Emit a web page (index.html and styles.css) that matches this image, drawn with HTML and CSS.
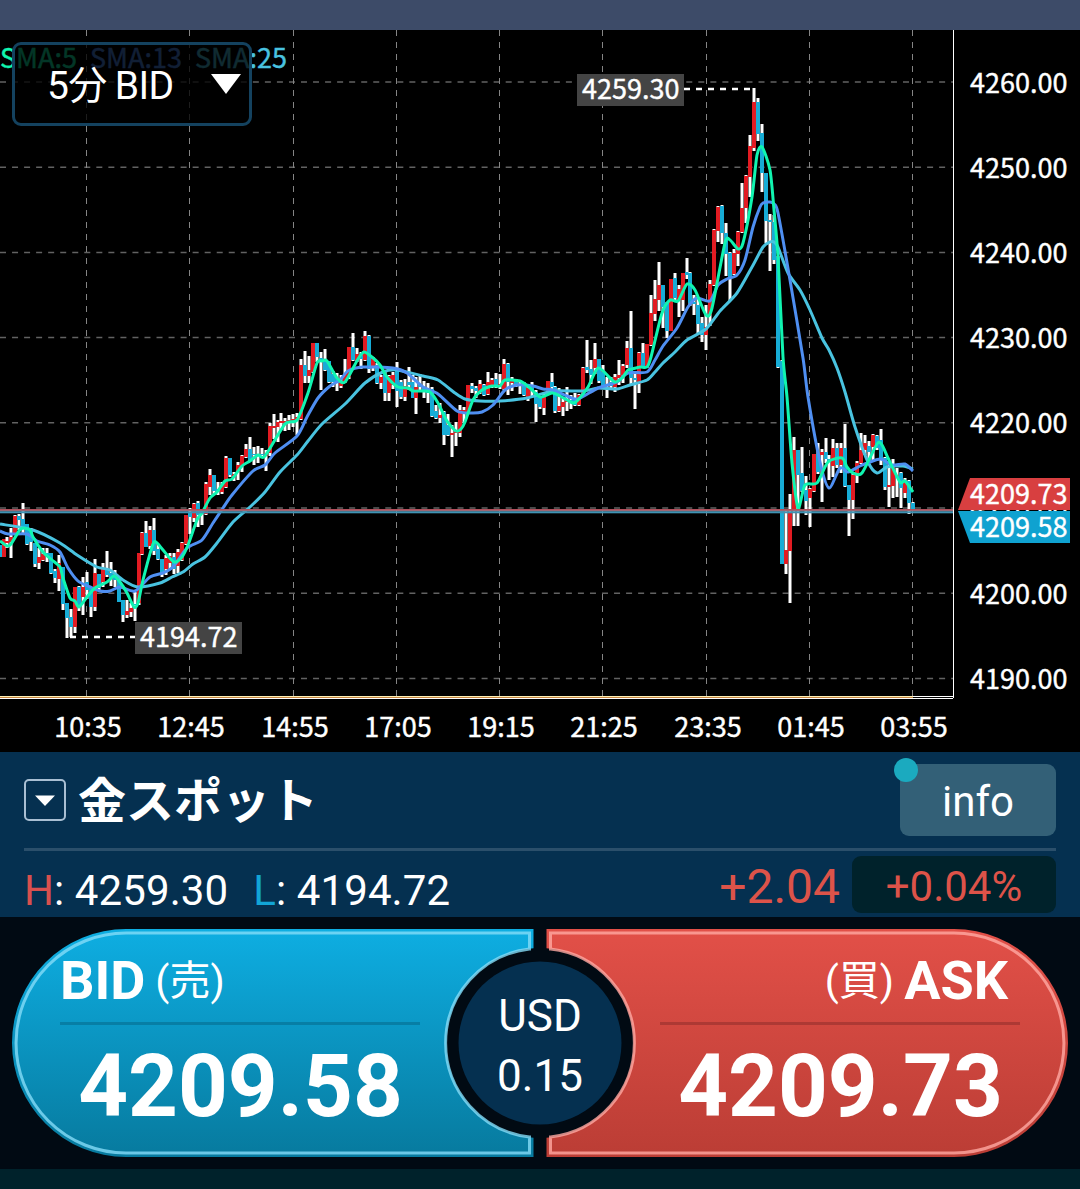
FILE: index.html
```html
<!DOCTYPE html>
<html lang="ja">
<head>
    <meta charset="UTF-8">
    <meta name="viewport" content="width=device-width, initial-scale=1.0">
    <title>金スポット</title>
    <link rel="stylesheet" href="styles.css">
</head>
<body>
    <div class="status-bar"></div>

    <!-- Chart -->
    <div class="chart">
        <svg id="chart" width="1080" height="722" viewBox="0 30 1080 722">
            <g id="grid"></g>
            <g id="candles"></g>
            <g id="averages"></g>
            <g id="overlay"></g>
        </svg>
        <div class="period-select">
            <span>5分 BID</span>
            <svg width="30" height="22" viewBox="0 0 30 22"><path d="M0 1H30L15 21Z" fill="#fff"/></svg>
        </div>
    </div>

    <!-- Instrument -->
    <div class="instrument">
        <div class="title-row">
            <svg class="toggle" width="42" height="42" viewBox="0 0 42 42">
                <rect x="1" y="1" width="40" height="40" rx="4" fill="none" stroke="#a9bfd3" stroke-width="2"/>
                <path d="M11 16.500H31L21 27Z" fill="#fff"/>
            </svg>
            <h1>金スポット</h1>
            <div class="info">info<i class="dot"></i></div>
        </div>
        <div class="stats-row">
            <span class="high"><b>H</b>: 4259.30</span>
            <span class="low"><b>L</b>: 4194.72</span>
            <span class="change">+2.04</span>
            <span class="percent">+0.04%</span>
        </div>
    </div>

    <!-- Order buttons -->
    <div class="order">
        <svg class="order-shape" width="1080" height="252" viewBox="0 0 1080 252">
            <defs>
                <linearGradient id="blue" x1="0" y1="0" x2="0" y2="1">
                    <stop offset="0" stop-color="#0eaee2"/>
                    <stop offset="1" stop-color="#077a9e"/>
                </linearGradient>
                <linearGradient id="red" x1="0" y1="0" x2="0" y2="1">
                    <stop offset="0" stop-color="#e25048"/>
                    <stop offset="1" stop-color="#bb3d35"/>
                </linearGradient>
            </defs>
            <path d="M533.500 12H126A114 114 0 0 0 126 240H533.500V220.700A95 95 0 0 1 533.500 31.300Z" fill="url(#blue)"/>
            <path d="M529.500 16H126A110 110 0 0 0 126 236H529.500V219.900A94.500 94.500 0 0 1 529.500 32.100Z" class="edge" stroke="#85dcf8"/>
            <g transform="matrix(-1 0 0 1 1080 0)">
                <path d="M533.500 12H126A114 114 0 0 0 126 240H533.500V220.700A95 95 0 0 1 533.500 31.300Z" fill="url(#red)"/>
                <path d="M529.500 16H126A110 110 0 0 0 126 236H529.500V219.900A94.500 94.500 0 0 1 529.500 32.100Z" class="edge" stroke="#ffa9a3"/>
            </g>
            <circle cx="540" cy="126" r="81.500" fill="#053050"/>
        </svg>
        <div class="side bid">
            <div class="label"><b>BID</b><small>(売)</small></div>
            <div class="price">4209.58</div>
        </div>
        <div class="spread">
            <div>USD</div>
            <div>0.15</div>
        </div>
        <div class="side ask">
            <div class="label"><small>(買)</small><b>ASK</b></div>
            <div class="price">4209.73</div>
        </div>
    </div>

    <script src="chart.js"></script>
</body>
</html>
```
FILE: styles.css
```css
* {
    margin: 0;
    padding: 0;
    box-sizing: border-box;
}

body {
    width: 1080px;
    height: 1189px;
    overflow: hidden;
    background-color: #00222b;
    color: #fff;
    font-family: Roboto, "Noto Sans CJK JP", sans-serif;
}

svg {
    display: block;
}

.status-bar {
    height: 30px;
    background-color: #3d4b68;
}

/* Chart */
.chart {
    position: relative;
    height: 722px;
    background-color: #000;
}

.chart text {
    font-family: "Noto Sans CJK JP", sans-serif;
    font-size: 27px;
    fill: #fff;
    stroke: #fff;
    stroke-width: 0.4;
}

.chart .sma5 {
    fill: #10f5b0;
    stroke: #10f5b0;
}

.chart .sma13 {
    fill: #4f8ff2;
    stroke: #4f8ff2;
}

.chart .sma25 {
    fill: #49c3e0;
    stroke: #49c3e0;
}

.average {
    fill: none;
    stroke-width: 3;
    stroke-linejoin: round;
}

.period-select {
    position: absolute;
    left: 12px;
    top: 12px;
    width: 240px;
    height: 84px;
    padding: 0 8px 0 32px;
    display: flex;
    align-items: center;
    justify-content: space-between;
    border: 3px solid #14425f;
    border-radius: 9px;
    background-color: rgba(0, 0, 0, 0.78);
    font-size: 39px;
    line-height: 78px;
}

.period-select span {
    padding-top: 4px;
    letter-spacing: -0.6px;
    word-spacing: -1px;
}

/* Instrument */
.instrument {
    height: 165px;
    padding: 0 24px;
    background-color: #053050;
}

.title-row {
    height: 99px;
    display: flex;
    align-items: center;
    border-bottom: 3px solid #2b4f6b;
}

.title-row h1 {
    margin-left: 12px;
    padding-bottom: 7px;
    font-family: "Noto Sans CJK JP", sans-serif;
    font-size: 48px;
    line-height: 60px;
}

.info {
    position: relative;
    width: 156px;
    height: 72px;
    margin-left: auto;
    border-radius: 9px;
    background-color: #336077;
    font-size: 42px;
    line-height: 75px;
    text-align: center;
}

.dot {
    position: absolute;
    left: -6px;
    top: -6px;
    width: 24px;
    height: 24px;
    border-radius: 50%;
    background-color: #1baabf;
}

.stats-row {
    height: 66px;
    padding-top: 5px;
    display: flex;
    align-items: flex-start;
    font-size: 42px;
    line-height: 62px;
}

.stats-row b {
    font-weight: 400;
}

.high,
.low {
    padding-top: 4px;
    letter-spacing: 0.1px;
}

.high b {
    color: #d7504f;
}

.low {
    margin-left: 25px;
}

.low b {
    color: #12a5d6;
}

.change {
    margin-left: auto;
    font-size: 48px;
    color: #dd5349;
}

.percent {
    width: 204px;
    height: 57px;
    margin-left: 12px;
    border-radius: 9px;
    background-color: #00222b;
    text-align: center;
    color: #dd5349;
}

/* Order buttons */
.order {
    position: relative;
    height: 252px;
    padding: 0 60px;
    display: flex;
    justify-content: space-between;
    background-color: #010a13;
}

.order-shape {
    position: absolute;
    left: 0;
    top: 0;
}

.edge {
    fill: none;
    stroke-width: 3;
    stroke-opacity: 0.8;
}

.side {
    position: relative;
    width: 360px;
    padding-top: 30px;
}

.label {
    height: 78px;
    display: flex;
    gap: 10px;
    border-bottom: 3px solid #077ea5;
    font-size: 54px;
    line-height: 68px;
}

.label small {
    font-size: 41px;
    line-height: 68px;
}

.ask .label {
    padding-right: 12px;
    justify-content: flex-end;
    border-color: #ad3934;
}

.price {
    padding-left: 1px;
    font-size: 87px;
    font-weight: 700;
    line-height: 122px;
    text-align: center;
}

.spread {
    position: relative;
    width: 160px;
    padding-top: 69px;
    font-size: 44px;
    line-height: 60px;
    text-align: center;
}
```
FILE: chart.js
```js
// high, body top, body bottom, low, direction (1 = up, 0 = down)
const candles = [
    [545,545,557,557,0],[539,539,557,557,1],[537,541,543,548,1],[528,537,542,558,1],[515,516,534,535,1],
    [514,516,520,530,0],[503,519,527,535,0],[524,524,544,545,0],[528,530,542,551,0],[543,543,564,567,0],
    [548,557,563,569,1],[548,554,560,561,1],[548,553,556,562,0],[553,553,573,574,0],[569,571,578,583,0],
    [555,563,579,591,1],[567,567,604,610,0],[603,603,618,638,0],[609,617,627,637,0],[587,587,627,633,1],
    [586,587,605,611,0],[577,587,597,615,1],[572,582,590,599,0],[588,588,607,617,0],[559,573,607,611,1],
    [574,574,588,591,0],[563,569,582,587,1],[551,570,575,577,0],[562,573,577,586,0],[570,575,580,587,0],
    [578,580,602,602,0],[600,600,615,622,0],[600,611,615,618,1],[603,608,612,617,1],[592,604,605,621,0],
    [553,553,603,605,1],[532,533,554,555,1],[521,533,547,547,0],[526,530,546,549,1],[518,530,551,555,0],
    [544,549,559,560,0],[559,559,574,577,0],[555,558,569,575,1],[553,556,563,569,1],[553,557,569,574,0],
    [549,552,566,573,1],[542,543,560,561,1],[515,515,544,545,1],[508,513,517,534,0],[503,504,518,522,1],
    [501,503,515,527,0],[510,513,514,525,0],[482,484,514,515,1],[469,475,487,495,1],[475,475,491,494,0],
    [482,489,491,495,0],[482,484,492,494,1],[456,458,487,488,1],[458,458,475,477,0],[472,474,476,481,1],
    [462,465,472,480,1],[455,456,467,472,1],[444,449,457,458,1],[437,449,460,461,0],[447,454,455,465,0],
    [446,455,456,463,1],[448,454,455,457,0],[450,454,456,471,1],[423,426,453,456,1],[414,426,428,439,1],
    [420,422,427,442,1],[413,421,423,430,1],[418,421,423,431,1],[415,420,422,430,1],[414,419,421,427,1],
    [413,417,419,435,1],[359,365,419,420,1],[351,365,376,383,0],[356,370,376,383,1],[343,343,372,373,1],
    [343,343,357,362,0],[352,358,361,390,0],[349,360,370,371,0],[361,361,382,383,0],[371,374,382,387,0],
    [373,379,383,391,0],[375,383,386,388,1],[359,374,382,383,1],[347,347,377,379,1],[333,347,360,361,0],
    [348,354,360,362,1],[352,356,359,369,0],[331,336,360,361,1],[335,336,369,373,0],[357,359,368,371,1],
    [363,365,383,384,0],[375,377,383,389,1],[372,374,393,401,0],[375,376,393,401,1],[372,375,385,389,1],
    [362,370,391,407,0],[380,382,397,399,0],[379,386,397,401,1],[367,382,385,390,0],[375,382,398,398,0],
    [377,387,398,414,1],[374,384,387,392,0],[381,388,390,398,0],[383,391,393,403,0],[387,389,416,417,0],
    [405,411,418,419,0],[403,415,418,423,1],[411,412,435,445,0],[414,425,435,436,0],[425,433,435,457,1],
    [422,432,433,446,1],[405,410,433,437,1],[407,410,412,423,1],[385,385,413,414,1],[383,386,389,393,0],
    [386,388,391,398,0],[380,384,393,394,1],[384,385,395,396,0],[372,382,394,395,1],[378,380,385,388,1],
    [373,379,385,388,0],[374,384,386,389,1],[359,364,389,390,1],[363,364,382,395,0],[377,381,383,391,1],
    [379,381,384,387,0],[380,384,386,394,0],[382,384,395,396,0],[387,388,397,401,1],[382,387,391,397,0],
    [390,392,404,422,0],[396,397,407,409,0],[393,395,408,415,1],[381,381,393,394,1],[373,382,387,394,0],
    [386,387,411,413,0],[388,406,411,412,1],[397,402,407,416,1],[387,400,402,411,1],[395,400,402,409,0],
    [393,400,405,406,0],[394,395,405,406,1],[367,368,393,395,1],[340,367,370,373,0],[360,369,375,384,0],
    [343,359,368,374,1],[359,359,381,383,0],[365,372,385,387,0],[377,384,386,398,0],[377,382,386,388,0],
    [374,377,387,392,1],[360,375,378,385,1],[364,366,375,383,1],[341,348,365,368,1],[311,348,378,384,0],
    [374,378,380,409,0],[352,353,384,393,1],[343,353,366,368,0],[344,344,366,368,1],[295,313,345,346,1],
    [280,299,314,321,1],[262,285,300,311,1],[285,285,307,328,0],[302,303,331,338,0],[279,279,331,331,1],
    [273,278,298,301,0],[285,289,300,317,1],[273,273,300,311,1],[258,272,275,279,0],[272,273,303,306,0],
    [295,302,304,315,0],[297,305,324,333,0],[317,323,335,342,0],[305,327,335,350,1],[280,284,315,326,1],
    [229,230,285,286,1],[206,207,231,242,1],[205,206,233,244,0],[223,233,254,276,0],[252,253,277,301,0],
    [249,253,274,275,1],[231,232,254,266,1],[183,208,232,233,1],[175,176,208,223,1],[135,146,177,197,1],
    [88,102,148,151,1],[98,102,134,141,0],[124,133,173,192,0],[173,173,221,243,0],[214,220,222,271,0],
    [215,222,260,264,0],[256,257,367,368,0],[360,361,564,564,0],[511,550,564,574,1],[494,512,551,603,1],
    [437,450,511,526,1],[450,450,475,526,0],[447,473,491,492,0],[476,490,501,515,0],[488,489,498,527,1],
    [454,454,491,492,1],[443,454,472,474,0],[449,452,455,502,1],[438,452,459,463,0],[455,459,461,480,0],
    [439,448,466,477,1],[443,448,465,468,0],[443,448,465,473,1],[424,448,486,487,0],[485,485,500,536,0],
    [474,475,500,519,1],[461,463,475,483,1],[433,450,463,464,1],[435,443,450,455,1],[441,446,452,462,0],
    [434,435,447,462,1],[435,436,448,450,0],[429,440,460,465,0],[457,458,487,490,0],[463,485,487,507,1],
    [459,465,486,498,1],[468,476,478,497,0],[472,473,488,508,0],[478,482,493,498,1],[480,481,503,514,0],
    [502,503,509,509,0]
];

const averages = [
    { color: '#49c3e0', points: '0,524 33,530 60,543 77,555 97,567 110,570 123,580 138,587 160,583 172,577 183,572 193,564 205,557 217,543 233,522 250,507 265,492 280,472 297,455 308,441 322,424 345,404 365,383 383,372 397,370 423,376 438,380 455,393 465,399 480,401 500,401 527,398 553,391 583,391 598,388 617,389 630,385 647,380 655,372 663,363 675,352 687,340 706,329 720,311 737,293 752,267 763,247 770,242 774,242 778,247 788,273 800,290 810,310 822,338 829,350 837,368 845,392 855,427 868,462 877,473 887,467 903,466 913,469' },
    { color: '#4f8ff2', points: '0,531 8,534 27,534 37,541 50,545 60,552 68,568 78,581 88,586 100,591 110,591 120,587 135,591 150,577 163,573 173,567 187,548 202,540 213,523 223,508 232,495 253,471 265,465 275,453 297,436 307,417 318,398 330,386 340,380 348,371 363,367 393,368 407,373 423,387 438,394 457,411 470,413 482,412 493,405 505,390 517,385 533,386 543,389 553,390 567,396 578,399 598,388 617,382 628,373 647,372 655,360 663,346 677,328 688,307 697,298 710,301 718,285 727,279 737,275 745,260 753,227 760,207 763,203 770,202 774,204 778,213 790,280 803,358 808,397 820,462 829,488 840,468 848,472 860,466 870,462 881,459 892,465 905,464 913,471' },
    { color: '#10f5b0', points: '0,541 7,546 11,544 19,531 23,528 30,530 33,537 43,552 52,560 60,567 63,578 70,598 75,601 79,607 87,597 95,588 107,582 114,576 120,582 127,593 134,607 138,603 143,580 153,544 157,543 163,550 174,562 182,557 188,545 197,520 202,513 210,498 217,492 225,481 232,479 242,466 250,461 258,455 265,456 285,424 297,420 308,393 317,363 322,361 327,361 337,378 345,382 358,359 364,352 372,357 380,365 387,377 398,387 408,388 413,391 423,391 430,392 438,403 447,421 456,431 461,429 465,422 473,400 482,390 492,386 500,386 505,380 520,381 530,388 540,397 552,393 560,396 573,403 578,400 588,387 598,368 610,378 615,382 622,378 628,370 632,369 640,367 647,367 651,357 662,313 670,300 678,301 687,284 695,290 706,315 712,308 725,243 730,240 738,249 743,243 752,197 757,155 762,147 770,170 774,210 778,257 783,357 787,397 792,463 798,508 805,485 817,483 828,462 842,458 847,467 853,473 862,473 877,444 882,445 888,458 900,482 905,481 913,492' }
];

const times = ['10:35', '12:45', '14:55', '17:05', '19:15', '21:25', '23:35', '01:45', '03:55'];

// Turn a list of points into a smooth curve
function smoothPath(list) {
    const p = list.split(' ').map(pair => pair.split(',').map(Number));
    let d = `M${p[0]}`;
    for (let i = 0; i < p.length - 1; i++) {
        const a = p[i - 1] || p[i];
        const b = p[i];
        const c = p[i + 1];
        const e = p[i + 2] || c;
        d += `C${b[0] + (c[0] - a[0]) / 8} ${b[1] + (c[1] - a[1]) / 8} ${c[0] - (e[0] - b[0]) / 8} ${c[1] - (e[1] - b[1]) / 8} ${c[0]} ${c[1]}`;
    }
    return d;
}

// Grid, axes and scale labels
let grid = '';
for (let i = 0; i < 8; i++) {
    const y = 82 + i * 85.2;
    grid += `<path d="M0 ${y}H953" stroke="#626262" stroke-width="1.500" stroke-dasharray="6 6.04"/>`;
    grid += `<text x="970" y="${y + 10.5}">${4260 - i * 10}.00</text>`;
}
times.forEach((time, i) => {
    const x = Math.floor(86.6 + i * 103.25) + 0.5;
    grid += `<path d="M${x} 30V696" stroke="#858585" stroke-dasharray="6 6"/>`;
    grid += `<text x="${x + 1.5}" y="736.500" text-anchor="middle">${time}</text>`;
});
grid += '<path d="M953.500 30V698" stroke="#fff"/>';
grid += '<path d="M0 696.500H953M0 698.500H953" stroke="#fff"/>';
grid += '<path d="M0 696.500H913" stroke="#fff0b5"/><path d="M0 697.500H913" stroke="#c58540"/>';
grid += '<text class="sma5" x="0" y="68">SMA:5</text>';
grid += '<text class="sma13" x="90" y="68">SMA:13</text>';
grid += '<text class="sma25" x="195" y="68">SMA:25</text>';
document.getElementById('grid').innerHTML = grid;

// Candles
document.getElementById('candles').innerHTML = candles.map(([high, top, bottom, low, up], i) => {
    const x = Math.round(-2.46 + i * 3.971);
    return `<rect x="${x + 0.5}" y="${high}" width="3" height="${low - high}" fill="#fff"/>` +
        `<rect x="${x}" y="${top}" width="4" height="${bottom - top}" fill="${up ? '#e21b22' : '#17acd6'}"/>`;
}).join('');

document.getElementById('averages').innerHTML = averages.map(line =>
    `<path class="average" d="${smoothPath(line.points)}" stroke="${line.color}"/>`
).join('');

// Current prices, high and low markers
document.getElementById('overlay').innerHTML = `
    <rect x="0" y="509" width="953" height="2" fill="#b0505c"/>
    <rect x="0" y="510.500" width="953" height="1" fill="#8c7e8a"/>
    <rect x="0" y="511.300" width="953" height="2" fill="#3f93b3"/>
    <path d="M958 510L970 478H1070V510Z" fill="#d83f40"/>
    <path d="M958 511H1070V543H970Z" fill="#0fa2d0"/>
    <text x="970" y="504">4209.73</text>
    <text x="970" y="537">4209.58</text>
    <path d="M684 89H754M70 637H135" stroke="#fff" stroke-width="2.500" stroke-dasharray="6 6"/>
    <rect x="577" y="74" width="107" height="32" fill="#444"/>
    <text x="582" y="99">4259.30</text>
    <rect x="135" y="622" width="107" height="32" fill="#444"/>
    <text x="140" y="647">4194.72</text>`;
```
